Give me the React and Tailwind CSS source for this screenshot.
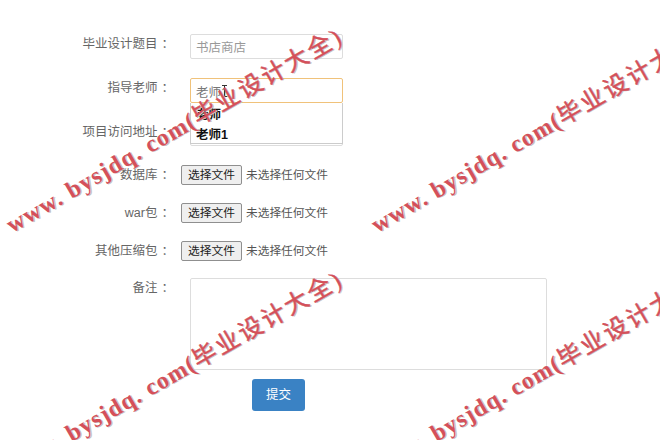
import React from 'react';

const FONT = "font-['Liberation_Sans','Noto_Sans_CJK_SC',sans-serif]";

function Watermark({ className }) {
    return (
        <div className={`absolute z-20 origin-top-left -rotate-[30deg] whitespace-nowrap pointer-events-none font-['Liberation_Serif','Noto_Sans_CJK_SC',serif] leading-none text-[#d4505a] [text-shadow:1px_1px_0_#c4c4c4] ${className}`}>
            <span className="font-bold text-[24px] tracking-[1.2px]">www. bysjdq. com(</span>
            <span className="text-[24px] tracking-[2.5px] [-webkit-text-stroke:0.4px_#d4505a]">毕业设计大全)</span>
        </div>
    );
}

function Label({ children, className = '' }) {
    return (
        <label className={`w-[174px] text-right text-[12.5px] text-[#666] ${className}`}>
            {children}<span className="ml-[4px]">：</span>
        </label>
    );
}

function FileRow({ label, className }) {
    return (
        <div className={`flex items-center h-[20px] ${className}`}>
            <Label>{label}</Label>
            <button className="ml-[7px] w-[61px] h-[20px] bg-[#efefef] border border-[#8f8f8f] rounded-[2px] text-[11.75px] leading-none text-[#222]">选择文件</button>
            <span className="ml-[4px] text-[11.7px] text-[#555]">未选择任何文件</span>
        </div>
    );
}

export default function App() {
    return (
        <div className={`relative w-[660px] h-[440px] overflow-hidden bg-white ${FONT}`}>
            <form className="pt-[34px]">
                <div className="flex items-start h-[25px]">
                    <Label className="pt-[1px]">毕业设计题目</Label>
                    <input readOnly placeholder="书店商店" className="ml-[16px] w-[153px] h-[25px] px-[5px] pt-[2px] border border-[#ddd] rounded-[2px] text-[12.5px] placeholder:text-[#999] outline-none" />
                </div>

                <div className="relative flex items-start h-[25px] mt-[19px]">
                    <Label className="pt-[1px]">指导老师</Label>
                    <input readOnly value="老师1" className="ml-[16px] w-[153px] h-[25px] px-[5px] pt-[2px] border border-[#f0c27a] rounded-[2px] text-[12.5px] text-[#777] outline-none" />
                    {/* mouse cursor left over the input */}
                    <svg className="absolute left-[221px] top-[7px]" width="7" height="12" viewBox="0 0 7 12" fill="none" stroke="#333" strokeWidth="1">
                        <path d="M1 .5h5M3.5 .5v11M1 11.5h5" />
                    </svg>
                    {/* autocomplete list sits over the next row */}
                    <div className="absolute left-[190px] top-[25px] z-10 w-[153px] h-[41px] bg-white border-x border-b border-[#ccc] pl-[5px] pt-[2px] text-[12.5px] leading-[20px] font-bold text-[#111]">
                        <div>老师</div>
                        <div>老师1</div>
                    </div>
                </div>

                <div className="flex items-start h-[24px] mt-[19px]">
                    <Label className="pt-[1px]">项目访问地址</Label>
                    <input readOnly className="ml-[16px] w-[153px] h-[24px] border border-[#ddd] rounded-[2px] outline-none" />
                </div>

                <FileRow label="数据库" className="mt-[19px]" />
                <FileRow label="war包" className="mt-[18px]" />
                <FileRow label="其他压缩包" className="mt-[18px]" />

                <div className="flex items-start mt-[17px]">
                    <Label className="pt-[1px]">备注</Label>
                    <textarea readOnly className="ml-[16px] w-[357px] h-[92px] border border-[#ddd] rounded-[2px] resize-none outline-none" />
                </div>

                <div className="pl-[252px] mt-[9px]">
                    <button className="w-[53px] h-[32px] bg-[#3a82c4] rounded-[3px] text-[12.5px] text-white">提交</button>
                </div>
            </form>

            <Watermark className="left-[2px] top-[216px]" />
            <Watermark className="left-[367px] top-[216px]" />
            <Watermark className="left-[2px] top-[459px]" />
            <Watermark className="left-[367px] top-[459px]" />
        </div>
    );
}
